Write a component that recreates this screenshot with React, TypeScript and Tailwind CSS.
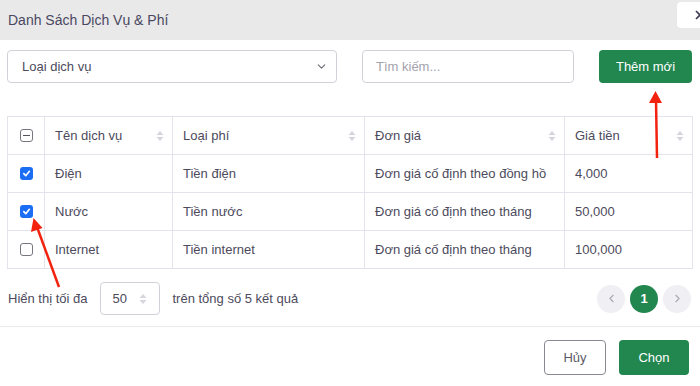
import { ChevronDown, ChevronLeft, ChevronRight, X } from 'lucide-react';

const rows = [
  { checked: true, name: 'Điện', type: 'Tiền điện', unit: 'Đơn giá cố định theo đồng hồ', price: '4,000' },
  { checked: true, name: 'Nước', type: 'Tiền nước', unit: 'Đơn giá cố định theo tháng', price: '50,000' },
  { checked: false, name: 'Internet', type: 'Tiền internet', unit: 'Đơn giá cố định theo tháng', price: '100,000' },
];

function SortIcon() {
  return (
    <svg width="8" height="12" viewBox="0 0 8 12" className="shrink-0">
      <path d="M4 1 L7.5 5 H0.5 Z" fill="#d6d6de" />
      <path d="M4 11 L7.5 7 H0.5 Z" fill="#d6d6de" />
    </svg>
  );
}

function Checkbox({ state }: { state: 'on' | 'off' | 'some' }) {
  if (state === 'on') {
    return (
      <span className="flex h-[13px] w-[13px] items-center justify-center rounded-[3px] bg-[#1b6ef3]">
        <svg width="9" height="9" viewBox="0 0 10 10">
          <path d="M2 5.2 L4.2 7.4 L8.2 2.6" stroke="white" strokeWidth="1.8" fill="none" strokeLinecap="round" strokeLinejoin="round" />
        </svg>
      </span>
    );
  }
  return (
    <span className="flex h-[13px] w-[13px] items-center justify-center rounded-[3px] border border-[#77767f] bg-white">
      {state === 'some' && <span className="h-[1.5px] w-[7px] bg-[#55545e]" />}
    </span>
  );
}

function HeadCell({ label }: { label: string }) {
  return (
    <th className="border border-[#e3e3ec] pl-[10px] pr-[8px] text-left font-normal">
      <div className="flex items-center justify-between">
        <span>{label}</span>
        <SortIcon />
      </div>
    </th>
  );
}

export default function App() {
  return (
    <div className="relative h-[386px] w-[700px] overflow-hidden bg-white text-[13px] text-[#4c4a5c]" style={{ fontFamily: '"Liberation Sans", Arial, sans-serif' }}>
      <div className="relative flex h-[40px] items-center bg-[#e9e9ea] pl-[8px] text-[14px] text-[#4a4860]">
        Danh Sách Dịch Vụ &amp; Phí
        <div className="absolute left-[677px] top-[2px] flex h-[26px] w-[30px] items-center rounded-[4px] bg-white pl-[16px]">
          <X size={14} strokeWidth={3} color="#3f3c55" />
        </div>
      </div>

      <div className="flex items-center pl-[7px] pt-[10px]">
        <div className="flex h-[33px] w-[330px] items-center justify-between rounded-[4px] border border-[#d2d1da] pl-[14px] pr-[8px]">
          <span>Loại dịch vụ</span>
          <ChevronDown size={13} color="#6b6a75" />
        </div>
        <div className="ml-[25px] flex h-[33px] w-[212px] items-center rounded-[4px] border border-[#d2d1da] pl-[13px] text-[#a3a2ad]">
          Tìm kiếm...
        </div>
        <div className="ml-[25px] flex h-[33px] w-[93px] items-center justify-center rounded-[4px] bg-[#22864f] font-medium text-white">
          Thêm mới
        </div>
      </div>

      <table className="ml-[7px] mt-[33px] w-[685px] table-fixed border-collapse">
        <colgroup>
          <col className="w-[37px]" />
          <col className="w-[128px]" />
          <col className="w-[192px]" />
          <col className="w-[200px]" />
          <col className="w-[128px]" />
        </colgroup>
        <thead>
          <tr className="h-[38px]">
            <th className="border border-[#e3e3ec]">
              <div className="flex justify-center">
                <Checkbox state="some" />
              </div>
            </th>
            <HeadCell label="Tên dịch vụ" />
            <HeadCell label="Loại phí" />
            <HeadCell label="Đơn giá" />
            <HeadCell label="Giá tiền" />
          </tr>
        </thead>
        <tbody>
          {rows.map((r) => (
            <tr key={r.name} className="h-[38px]">
              <td className="border border-[#e3e3ec]">
                <div className="flex justify-center">
                  <Checkbox state={r.checked ? 'on' : 'off'} />
                </div>
              </td>
              <td className="border border-[#e3e3ec] px-[10px]">{r.name}</td>
              <td className="border border-[#e3e3ec] px-[10px]">{r.type}</td>
              <td className="border border-[#e3e3ec] px-[10px] whitespace-nowrap">{r.unit}</td>
              <td className="border border-[#e3e3ec] px-[10px]">{r.price}</td>
            </tr>
          ))}
        </tbody>
      </table>

      <div className="mt-[13px] flex items-center justify-between pl-[8px] pr-[9px]">
        <div className="flex items-center">
          <span>Hiển thị tối đa</span>
          <div className="ml-[12px] flex h-[33px] w-[60px] items-center justify-between rounded-[4px] border border-[#d2d1da] pl-[12px] pr-[12px]">
            <span>50</span>
            <SortIcon />
          </div>
          <span className="ml-[13px]">trên tổng số 5 kết quả</span>
        </div>
        <div className="flex items-center gap-[5px]">
          <span className="flex h-[28px] w-[28px] items-center justify-center rounded-full bg-[#f0eff4]">
            <ChevronLeft size={13} color="#a9a8b3" />
          </span>
          <span className="flex h-[28px] w-[28px] items-center justify-center rounded-full bg-[#22864f] font-bold text-white">1</span>
          <span className="flex h-[28px] w-[28px] items-center justify-center rounded-full bg-[#f0eff4]">
            <ChevronRight size={13} color="#a9a8b3" />
          </span>
        </div>
      </div>

      <div className="mt-[11px] border-t border-[#ececf0]" />

      <div className="flex justify-end gap-[13px] pr-[11px] pt-[13px]">
        <div className="flex h-[35px] w-[62px] items-center justify-center rounded-[4px] border border-[#8a8993] text-[#5a5966]">Hủy</div>
        <div className="flex h-[35px] w-[70px] items-center justify-center rounded-[4px] bg-[#22864f] font-medium text-white">Chọn</div>
      </div>

      <svg className="pointer-events-none absolute left-0 top-0" width="700" height="386">
        <line x1="657" y1="158" x2="656" y2="100" stroke="#f2220f" strokeWidth="2.5" />
        <path d="M655.5 91 L649 103 L662 103 Z" fill="#f2220f" />
        <line x1="59" y1="287" x2="37" y2="227" stroke="#f2220f" strokeWidth="2.5" />
        <path d="M33.5 218 L31 232 L42.5 228 Z" fill="#f2220f" />
      </svg>
    </div>
  );
}
